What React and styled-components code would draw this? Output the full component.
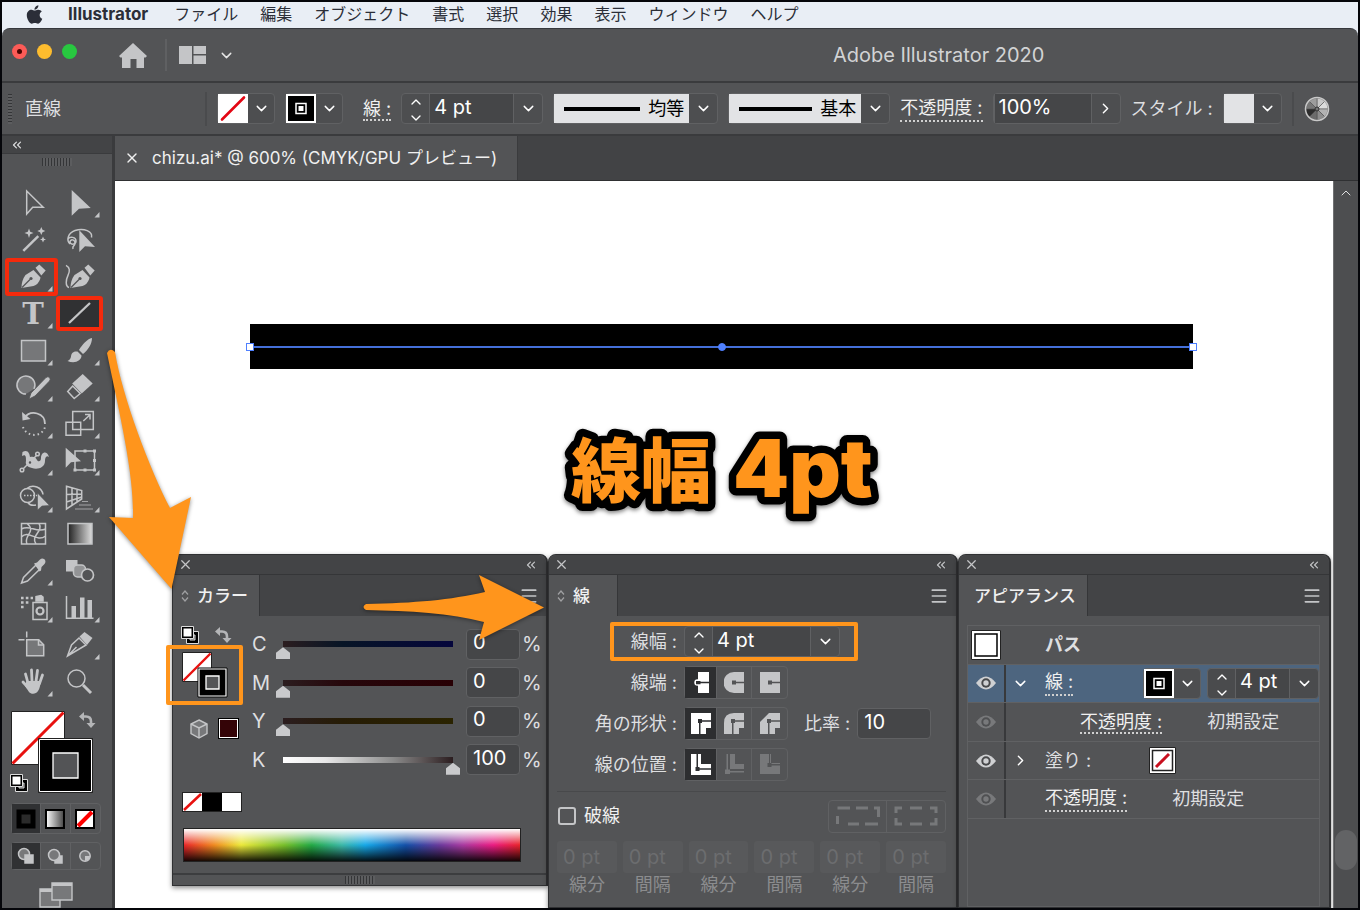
/* eslint-disable react/prop-types */
import styled, { createGlobalStyle, css } from 'styled-components';
import { ChevronDown, ChevronRight, ChevronUp, ChevronsLeft, Menu, X } from 'lucide-react';
import { FaApple } from 'react-icons/fa';

const GlobalStyle = createGlobalStyle`
  :root {
    --panel: #535456;
    --dark: #434446;
    --field: #454648;
    --line: #3a3b3d;
    --edge: #606163;
    --icon: #c4c5c7;
    --text: #dedfe0;
    --orange: #ff951c;
    --red: #f52a0c;
  }
  * {
    box-sizing: border-box;
  }
  body {
    margin: 0;
    font-family: Inter, 'Noto Sans CJK JP', sans-serif;
    font-size: 18px;
    line-height: 24px;
    color: var(--text);
  }
  button, input, select {
    font: inherit;
    color: inherit;
    margin: 0;
    padding: 0;
    border: 0;
    background: none;
    border-radius: 0;
  }
  svg {
    display: block;
    flex: none;
  }
`;

const Screen = styled.div`
  position: relative;
  display: flex;
  flex-direction: column;
  height: 100vh;
  overflow: hidden;
  border: 2px solid #05060a;
  background: #e9eef5;
`;

/* ---------- menu bar ---------- */

const MenuBar = styled.nav`
  display: flex;
  align-items: center;
  height: 26px;
  padding: 0 0 2px 22px;
  gap: 22px;
  color: #2b2e38;
  font-size: 16px;
  white-space: nowrap;
  a {
    color: inherit;
    text-decoration: none;
  }
  strong {
    margin-right: 4px;
    padding-left: 1px;
    font-size: 17px;
    font-weight: 700;
  }
`;

/* ---------- window frame ---------- */

const AppWindow = styled.div`
  display: flex;
  flex-direction: column;
  flex: 1;
  min-height: 0;
  background: var(--panel);
  border-top: 1px solid #35373c;
  border-radius: 8px 8px 0 0;
`;

const TitleBar = styled.header`
  display: flex;
  align-items: center;
  height: 54px;
  padding-left: 10px;
  border-bottom: 2px solid var(--line);
`;

const Lights = styled.div`
  display: flex;
  gap: 10px;
  padding-bottom: 8px;
  margin-right: 42px;
`;

const Light = styled.button`
  display: grid;
  place-items: center;
  width: 15px;
  height: 15px;
  border-radius: 50%;
  background: ${(p) => p.$color};
  &::after {
    content: '';
    width: 5px;
    height: 5px;
    border-radius: 50%;
    background: ${(p) => (p.$dot ? '#4a0502' : 'none')};
  }
`;

const IconButton = styled.button`
  display: grid;
  place-items: center;
  color: ${(p) => p.$color || 'var(--icon)'};
`;

const Divider = styled.span`
  width: 2px;
  height: ${(p) => p.$height || 32}px;
  background: ${(p) => p.$color || '#5f6062'};
`;

const LayoutTools = styled.div`
  display: flex;
  align-items: center;
  gap: 12px;
  margin-left: 18px;
`;

const Title = styled.h1`
  margin: 0 23% 0 auto;
  padding-right: 4px;
  font-size: 20px;
  font-weight: 400;
  color: #d2d3d4;
`;

/* ---------- shared controls ---------- */

const Control = styled.div`
  display: flex;
  height: 31px;
  width: ${(p) => p.$width}px;
  border: 1px solid var(--edge);
  border-radius: 4px;
  background: ${(p) => (p.$solid ? '#4a4b4d' : '#4d4e50')};
  color: #fff;
`;

const Arrow = styled.button`
  display: grid;
  place-items: center;
  width: 28px;
  height: 100%;
  color: #fff;
`;

const Spinner = styled.div`
  display: grid;
  grid-template-rows: 1fr 1fr;
  width: 27px;
  button {
    display: grid;
    place-items: center;
    color: #fff;
  }
`;

const ValueInput = styled.input`
  flex: 1;
  min-width: 0;
  padding: 0 0 4px 4px;
  font-size: 20px;
  color: #fff;
  background: var(--field);
  border: solid var(--edge);
  border-width: 0 1px;
`;

const BoxInput = styled.input`
  width: ${(p) => p.$width}px;
  height: 31px;
  padding: 0 0 4px 6px;
  font-size: 20px;
  color: #fff;
  background: var(--field);
  border: 1px solid var(--edge);
  border-radius: 4px;
`;

const Dotted = styled.a`
  color: ${(p) => p.$color || '#f0f0f0'};
  text-decoration: none;
  line-height: 24px;
  border-bottom: 2px dotted #d0d0d0;
  white-space: nowrap;
`;

const SwatchButton = styled.button`
  width: 30px;
  height: 29px;
`;

const StrokeSample = styled.label`
  display: flex;
  align-items: center;
  gap: 8px;
  flex: 1;
  padding-left: 10px;
  background: #e2e3e5;
  color: #000;
  select {
    appearance: none;
    width: 40px;
  }
`;

const ControlBar = styled.div`
  display: flex;
  align-items: center;
  height: 53px;
  gap: 10px;
  padding-left: 6px;
  border-bottom: 2px solid var(--line);
  white-space: nowrap;
`;

const ObjectKind = styled.span`
  width: 170px;
  margin-left: 3px;
`;

const Grip = styled.span`
  width: ${(p) => (p.$vertical ? 4 : 30)}px;
  height: ${(p) => (p.$vertical ? 30 : 8)}px;
  background: repeating-linear-gradient(
    ${(p) => (p.$vertical ? '180deg' : '90deg')},
    #343537 0 1px,
    #5c5d5f 1px 3px
  );
`;

const StrokeLabel = styled.span`
  padding-left: 10px;
`;

/* ---------- workspace ---------- */

const Workspace = styled.div`
  display: flex;
  flex: 1;
  min-height: 0;
`;

const Toolbox = styled.aside`
  display: flex;
  flex-direction: column;
  width: 113px;
  flex: none;
  border-right: 3px solid var(--line);
`;

const ToolboxHead = styled.div`
  display: flex;
  align-items: center;
  height: 18px;
  padding-left: 8px;
  background: var(--dark);
  border-bottom: 1px solid var(--line);
`;

const ToolboxGrip = styled.div`
  display: flex;
  justify-content: center;
  height: 31px;
  padding-top: 4px;
`;

const Tools = styled.div`
  display: grid;
  grid-template: repeat(14, 1fr) / 46px 46px;
  column-gap: 1px;
  height: 515px;
  padding-left: 8px;
`;

const Tool = styled.button`
  position: relative;
  display: grid;
  place-items: center;
  color: var(--icon);
  ${(p) =>
    p.$marked &&
    css`
      &::before {
        content: '';
        position: absolute;
        inset: ${p.$active ? '1px 0 1px -1px' : '-1px -2px -1px -5px'};
        border: 4px solid var(--red);
        border-radius: 3px;
        background: ${p.$active ? '#303133' : 'none'};
      }
    `}
  svg {
    position: relative;
  }
`;

const TypeGlyph = styled.span`
  font-family: 'DejaVu Serif', serif;
  font-weight: 700;
  font-size: 29px;
  line-height: 30px;
`;

const TypeCell = styled.span`
  display: grid;
  place-items: center;
  & > * {
    grid-area: 1 / 1;
  }
`;

const ProxyRow = styled.div`
  padding: 10px 0 0 8px;
`;

const ModeRow = styled.div`
  display: grid;
  grid-template-columns: repeat(3, 1fr);
  width: 90px;
  height: ${(p) => p.$height}px;
  margin: ${(p) => p.$top}px 0 0 9px;
  border: 1px solid var(--edge);
  border-radius: 4px;
  button {
    display: grid;
    place-items: center;
    border-right: 1px solid var(--edge);
  }
  button:first-child {
    background: #303133;
  }
  button:last-child {
    border: 0;
  }
`;

const ScreenMode = styled.button`
  margin: 12px 0 0 37px;
  width: 34px;
`;

const Main = styled.main`
  display: flex;
  flex-direction: column;
  flex: 1;
  min-width: 0;
`;

const TabBar = styled.div`
  display: flex;
  height: 45px;
  background: #424345;
  border-bottom: 1px solid #2f3032;
`;

const DocTab = styled.div`
  display: flex;
  align-items: center;
  gap: 12px;
  width: 403px;
  padding-left: 9px;
  font-size: 17px;
  color: #f0f0f0;
  background: var(--panel);
  border-right: 1px solid var(--line);
  white-space: nowrap;
`;

const Stage = styled.div`
  display: flex;
  flex: 1;
  min-height: 0;
`;

const Canvas = styled.div`
  position: relative;
  flex: 1;
  min-width: 0;
  overflow: hidden;
  background: #fff;
`;

const ScrollBar = styled.div`
  display: flex;
  flex-direction: column;
  align-items: center;
  width: 25px;
  padding-top: 4px;
  background: #4d4e50;
  border-left: 1px solid #707173;
`;

const ScrollThumb = styled.div`
  width: 22px;
  height: 40px;
  margin: auto 0 38px;
  border-radius: 11px;
  background: #626365;
`;

const LineObject = styled.div`
  position: relative;
  display: flex;
  align-items: center;
  height: 45px;
  margin: 143px 140px 0 135px;
  background: #000;
  &::before {
    content: '';
    flex: 1;
    height: 2px;
    background: #446fd8;
  }
`;

const Anchor = styled.span`
  position: absolute;
  left: ${(p) => p.$at};
  top: 50%;
  width: 8px;
  height: 8px;
  transform: translate(-50%, -50%);
  border: 1px solid #4f80ff;
  border-radius: ${(p) => (p.$round ? '50%' : 0)};
  background: ${(p) => (p.$round ? '#4f80ff' : '#fff')};
`;

const Caption = styled.svg`
  margin: 41px auto 0;
  font-size: 70px;
  font-weight: 900;
  fill: var(--orange);
  stroke: #000;
  stroke-width: 15px;
  stroke-linejoin: round;
  paint-order: stroke fill;
  filter: drop-shadow(0 2px 2px rgba(0, 0, 0, 0.5));
`;

/* ---------- floating panels ---------- */

const Dock = styled.div`
  position: absolute;
  inset: 373px 2px 0 57px;
  display: grid;
  grid-template-columns: 376fr 410fr 373fr;
  align-items: start;
`;

const PanelBox = styled.section`
  min-width: 0;
  height: ${(p) => (p.$fill ? '100%' : 'auto')};
  background: var(--panel);
  border: solid #303133;
  border-width: 1px 2px 1px 1px;
  border-radius: 8px 8px 0 0;
  box-shadow: 0 2px 5px rgba(0, 0, 0, 0.45);
`;

const PanelHead = styled.div`
  display: flex;
  justify-content: space-between;
  align-items: center;
  height: 20px;
  padding: 0 8px 0 5px;
  background: var(--dark);
  border-bottom: 1px solid #353638;
  border-radius: 8px 8px 0 0;
`;

const PanelTabs = styled.div`
  display: flex;
  height: 41px;
  justify-content: space-between;
  align-items: center;
  padding-right: 7px;
  background: var(--dark);
`;

const PanelTab = styled.h2`
  display: flex;
  align-items: center;
  gap: 8px;
  height: 100%;
  width: ${(p) => p.$width}px;
  margin: 0;
  padding-left: ${(p) => p.$pad || 8}px;
  font-size: 17px;
  font-weight: 500;
  color: #f0f0f0;
  background: var(--panel);
  border-right: 1px solid #353638;
  white-space: nowrap;
`;

const ColorBody = styled.div`
  display: grid;
  grid-template-columns: 62px 1fr;
  gap: 9px;
  padding: 9px 5px 0 8px;
`;

const ColorSide = styled.div`
  display: flex;
  flex-direction: column;
`;

const SideRow = styled.div`
  display: flex;
  align-items: center;
  justify-content: space-between;
  height: 20px;
  padding: 0 11px 0 0;
`;

const MarkedProxy = styled.div`
  position: relative;
  margin-top: 7px;
  padding: 0 0 0 1px;
  &::before {
    content: '';
    position: absolute;
    inset: -7px 0 -7px -15px;
    border: 4px solid var(--orange);
    border-radius: 2px;
  }
`;

const CubeRow = styled.div`
  display: flex;
  gap: 10px;
  align-items: center;
  padding: 20px 0 0 9px;
`;

const NearColor = styled.button`
  width: 21px;
  height: 21px;
  border: 2px solid #fff;
  outline: 1px solid #000;
  outline-offset: -1px;
  background: #340407;
`;

const Channels = styled.div`
  display: grid;
  grid-template-rows: repeat(4, 1fr);
  height: 154px;
`;

const ChannelRow = styled.div`
  display: grid;
  grid-template-columns: 20px 184px 54px 16px;
  gap: 0 4px;
  align-items: center;
  font-size: 20px;
  input[type='text'] {
    margin-left: 2px;
  }
`;

const Slider = styled.input`
  appearance: none;
  width: 184px;
  height: 30px;
  background: ${(p) => p.$ramp} 7px 12px / 170px 6px no-repeat;
  &::-webkit-slider-runnable-track {
    height: 30px;
  }
  &::-webkit-slider-thumb {
    appearance: none;
    width: 14px;
    height: 12px;
    margin-top: 18px;
    background: #c9cacc;
    clip-path: polygon(50% 0, 100% 45%, 100% 100%, 0 100%, 0 45%);
  }
`;

const Chips = styled.div`
  display: flex;
  width: 60px;
  height: 20px;
  margin: 13px 0 0 9px;
  border: 1px solid #222;
  button {
    flex: 1;
    background: #fff;
  }
  button:nth-child(2) {
    background: #000;
  }
`;

const Spectrum = styled.div`
  height: 34px;
  margin: 16px 25px 11px 10px;
  border: 1px solid #222;
  background:
    linear-gradient(#fff, rgba(255, 255, 255, 0) 50%, rgba(0, 0, 0, 0) 50%, rgba(0, 0, 0, 0.9)),
    linear-gradient(
      90deg,
      #e8262a,
      #f08a20 9%,
      #ece83a 17%,
      #76be2a 30%,
      #23a945 38%,
      #3cb8a8 47%,
      #16a8e8 54%,
      #1450a8 66%,
      #6a3a9c 76%,
      #a83aa0 83%,
      #ea1c82 92%,
      #e8242a
    );
`;

const PanelFoot = styled.div`
  display: flex;
  justify-content: center;
  height: 12px;
  padding-top: 1px;
  border-top: 2px solid #3c3d3f;
`;

const StrokeBody = styled.div`
  padding: 5px 10px 0 8px;
`;

const FormRow = styled.div`
  position: relative;
  display: grid;
  grid-template-columns: 120px auto 1fr;
  gap: 7px;
  align-items: center;
  height: 41px;
  & > label:first-child,
  & > span:first-child {
    text-align: right;
    white-space: nowrap;
  }
  ${(p) =>
    p.$marked &&
    css`
      &::before {
        content: '';
        position: absolute;
        inset: 1px 88px 1px 53px;
        border: 4px solid var(--orange);
        border-radius: 2px;
        z-index: 1;
        pointer-events: none;
      }
    `}
`;

const Segments = styled.div`
  display: flex;
  height: 33px;
  border: 1px solid var(--edge);
  border-radius: 4px;
  button {
    --gap: var(--panel);
    display: grid;
    place-items: center;
    width: ${(p) => p.$cell || 35}px;
    color: var(--icon);
    border-right: 1px solid var(--edge);
  }
  button:last-child {
    border: 0;
  }
  button[aria-pressed='true'] {
    --gap: #2d2e30;
    width: 32px;
    color: #fff;
    background: #2d2e30;
  }
  button:disabled {
    color: #77787a;
  }
`;

const Ratio = styled.label`
  display: flex;
  align-items: center;
  gap: 7px;
  padding-left: 9px;
  white-space: nowrap;
`;

const DashHead = styled.div`
  display: flex;
  justify-content: space-between;
  align-items: center;
  height: 46px;
  margin-top: 6px;
  padding-top: 3px;
  border-top: 1px solid #48494b;
`;

const CheckLabel = styled.label`
  display: flex;
  align-items: center;
  gap: 8px;
  padding-left: 1px;
  color: #f0f0f0;
  input {
    appearance: none;
    width: 18px;
    height: 18px;
    border: 2px solid var(--icon);
    border-radius: 3px;
  }
`;

const DashGrid = styled.div`
  display: grid;
  grid-template-columns: repeat(6, 1fr);
  gap: 6px;
  margin-top: 4px;
  color: #8b8c8e;
  text-align: center;
  input {
    display: block;
    width: 100%;
    height: 32px;
    padding-left: 6px;
    font-size: 20px;
    color: #6c6d6f;
    background: #58595b;
    border-radius: 3px;
  }
`;

const LookBody = styled.div`
  height: calc(100% - 70px);
  margin: 9px 9px 0 8px;
  border: 1px solid var(--edge);
`;

const LookList = styled.ul`
  display: grid;
  grid-template-rows: repeat(5, 1fr);
  height: 193px;
  margin: 0;
  padding: 0;
  list-style: none;
`;

const LookRow = styled.li`
  display: grid;
  grid-template-columns: 38px 39px auto 1fr;
  align-items: center;
  border-bottom: 1px solid var(--edge);
  background: ${(p) => (p.$selected ? '#4d657f' : 'none')};
  white-space: nowrap;
  strong {
    font-weight: 700;
    font-size: 18px;
  }
`;

const EyeCell = styled.button`
  display: grid;
  place-items: center;
  height: 100%;
  border-right: 2px solid ${(p) => (p.$plain ? 'transparent' : '#38393b')};
  svg {
    opacity: ${(p) => (p.$faint ? 0.3 : 1)};
  }
`;

const LookValue = styled.div`
  display: flex;
  align-items: center;
  justify-content: ${(p) => (p.$end ? 'flex-end' : 'flex-start')};
  gap: 6px;
  padding-left: ${(p) => p.$indent || 0}px;
`;

const LookLabel = styled.span`
  padding-left: ${(p) => p.$indent || 0}px;
`;

const Arrows = styled.svg`
  position: absolute;
  left: -2px;
  top: -2px;
  pointer-events: none;
  filter: drop-shadow(0 1px 2px rgba(0, 0, 0, 0.45));
`;

/* ---------- drawings ---------- */

const flyout = <path d="M42.5 27v5.5h-5z" fill="currentColor" />;

const penNib = (
  <>
    <path d="M11.5 29c0-5 1-9 4-13l8-5 7 7.5c-1 5-4 7.5-7 8.5z" fill="currentColor" />
    <path d="M25.5 8.7 29.3 5.4l6.4 6-4.4 5z" fill="currentColor" />
    <path d="m12 28.5 8-8" stroke="#535456" strokeWidth="1.3" />
    <circle cx="21" cy="19.5" r="1.6" fill="#535456" />
  </>
);

const TOOLS = [
  { name: 'ダイレクト選択', art: <path d="M16.7 6v23l6-6.7h10.5z" /> },
  { name: '選択', more: true, art: <path d="M14.7 5v25.7l7.3-7 11.7-.7z" fill="currentColor" stroke="none" /> },
  {
    name: '自動選択',
    art: (
      <>
        <path d="m13.3 28.9 15-14.7" strokeWidth="2.5" />
        <path
          stroke="none"
          fill="currentColor"
          d="m19 6.5 1.2 3.3 3.3 1.2-3.3 1.2-1.2 3.800-1.200-3.800-3.300-1.200 3.300-1.200zM31.300 5l1.200 2.800 2.800 1.200-2.800 1.200-1.200 2.800-1.200-2.800-2.800-1.200 2.800-1.200zM33 14.500l1 2.300 2 .7-2 .8-1 2.200-1-2.200-2-.8 2-.7z"
        />
      </>
    ),
  },
  {
    name: 'なげなわ',
    art: (
      <>
        <path d="M13 22c-4-4-2-11 5-13.500 9-3 18 1 16.500 7M11 17c2-3 8-2 8 2s-6 4-6 1 5-3 5 1-3 2-2 6" />
        <path d="M22.300 8.200v21.700l5.700-5.700 10 .7z" fill="currentColor" stroke="none" />
      </>
    ),
  },
  { name: 'ペン', more: true, marked: true, art: penNib, plain: true },
  {
    name: '曲線',
    art: (
      <>
        <g transform="translate(2 0)" stroke="none">
          {penNib}
        </g>
        <path d="M9 6.400c4 2 4 6 2 10s-3 11 1 12" />
      </>
    ),
  },
  { name: '文字', more: true, type: true },
  { name: '直線', marked: true, active: true, art: <path d="m12 27 21-20" strokeWidth="2.300" /> },
  { name: '長方形', more: true, art: <path d="M11.500 7.500h24v20.500h-24z" fill="#767779" /> },
  {
    name: 'ブラシ',
    more: true,
    art: (
      <path
        stroke="none"
        fill="currentColor"
        d="M35 5c-5 1-10 7-13 12l4 4c5-4 9-10 9-16zM20.500 18.500c-5-.5-6 2-6.500 5-.3 2-1.500 3.500-3.500 4.500 7 3 14 0 14-5.500z"
      />
    ),
  },
  {
    name: 'Shaper',
    more: true,
    art: (
      <>
        <path d="M24 20a9 9 0 1 0-8 5" fill="#767779" />
        <path d="m19 30 2-6L36 8.500q2-1.500 3.500 0t0 3.500L25 27z" fill="currentColor" stroke="#535456" strokeWidth=".8" />
      </>
    ),
  },
  {
    name: '消しゴム',
    more: true,
    art: (
      <>
        <path d="m25.700 5 10 9.500-11 10-9.500-10z" fill="currentColor" stroke="none" />
        <path d="m15.700 17-5 5.500 6.500 7 6-5z" />
      </>
    ),
  },
  {
    name: '回転',
    more: true,
    art: (
      <>
        <path d="M14 12c7-9 21-5 21 6" strokeWidth="1.800" />
        <path d="m12 6 .5 8.500 8-1.500z" fill="currentColor" stroke="none" />
        <path d="M13 21c3 10 19 11 22 0" strokeDasharray="1.500 3" strokeWidth="2" />
      </>
    ),
  },
  {
    name: '拡大・縮小',
    more: true,
    art: <path d="M15.700 5.500h20.600v18H15.700zM9 16.200h14.700v13H9zM26.300 15l6.500-6M28 8.500h5v5" />,
  },
  {
    name: '線幅',
    more: true,
    art: (
      <>
        <path
          d="M12.500 9c5-3 7 1 7.500 5 3-1 6 0 7 3 1 2 4 2 4-2 0-6 6-8 8-1-3-2-4 1-4 4 0 7-8 9-13 7-5-1-7-4-6-7 0-4 0-7-4-5z"
          fill="currentColor"
          stroke="none"
        />
        <path d="m12 27 15-15" />
        <circle cx="12" cy="27" r="1.800" fill="#535456" />
        <circle cx="27.500" cy="11" r="1.800" fill="#535456" />
        <circle cx="20" cy="19.500" r="2" fill="#535456" />
      </>
    ),
  },
  {
    name: '自由変形',
    more: true,
    art: (
      <>
        <path d="M18 8h19.500v19H18z" />
        <path
          d="M8.700 4.700v20l5.300-5.500 10-1zM26.500 6.500h3v3h-3zM36 6.500h3v3h-3zM36 16h3v3h-3zM36 25.500h3v3h-3zM26.500 25.500h3v3h-3zM16.500 25.500h3v3h-3z"
          fill="currentColor"
          stroke="none"
        />
      </>
    ),
  },
  {
    name: 'シェイプ形成',
    more: true,
    art: (
      <>
        <circle cx="17.500" cy="15.500" r="7" />
        <path d="M17 8.500c6-5 15-1 16 6M18 22.500c2 3 6 3 8 2.500" />
        <path d="M14 15.500h14" strokeDasharray="1.500 1.500" />
        <path d="M27.500 13v17l4.500-4 7.500-.5z" fill="currentColor" stroke="#535456" strokeWidth=".6" />
      </>
    ),
  },
  {
    name: '遠近グリッド',
    more: true,
    art: (
      <>
        <path d="M9.500 6.300 24.700 10.600V19L9.500 29zM9.500 14.500l15.200-.5M9.500 22l15.200-5M15 8v17M20 9.500v12.500" />
        <path d="M25 21.500h6M22 25h12M18 29h18" strokeWidth="1" opacity=".7" />
      </>
    ),
  },
  {
    name: 'メッシュ',
    art: <path d="M11.500 7.500h24v20.500h-24zM11.500 13c8-5 14 4 24 0M11.500 21c7-8 15 6 24-1M17 7.500c10 8-4 12 0 20.500M29 7.500c5 8-9 12-3 20.500" />,
  },
  { name: 'グラデーション', art: <path d="M11 7.500h24v20.500H11z" fill="url(#toolRamp)" /> },
  {
    name: 'スポイト',
    more: true,
    art: (
      <>
        <path d="m11.500 30 2-5.500L26 12l4 4-12.500 12z" />
        <path d="m24 10.500 3-1 3-3c3-3 7.500 1 4.500 4.500l-3 3-.5 3.500-1.500 1z" fill="currentColor" stroke="none" />
      </>
    ),
  },
  {
    name: 'ブレンド',
    art: (
      <>
        <path d="M9 7h11.500v11.500H9z" fill="currentColor" stroke="none" />
        <rect x="16.500" y="12" width="12" height="12" rx="4" fill="#939496" />
        <circle cx="30.500" cy="22" r="6" fill="#535456" strokeWidth="1.700" />
      </>
    ),
  },
  {
    name: 'シンボルスプレー',
    more: true,
    art: (
      <>
        <path d="M11 8h12M11 12.500h9M11 17h4" strokeWidth="2.600" strokeDasharray="2.600 2.200" />
        <path d="M26 11V6.500l5-1 2 1.500v4z" fill="currentColor" />
        <path d="M23 12.500h14v17H23z" />
        <circle cx="30" cy="21" r="3.500" strokeWidth="2.200" />
      </>
    ),
  },
  {
    name: 'グラフ',
    more: true,
    art: (
      <>
        <path d="M9.500 6v22.300h27" />
        <path d="M14.500 16h4.500v12h-4.500zM23 7.500h4.500V28H23zM30.500 10H35v18h-4.500z" fill="currentColor" stroke="none" />
      </>
    ),
  },
  {
    name: 'アートボード',
    art: (
      <>
        <path d="M16.700 12.700h12l5 5v11h-17z" fill="#767779" />
        <path d="M28.500 12.500v5.500h5.500M16.700 4.500v6M8.500 12.700h6" />
      </>
    ),
  },
  {
    name: 'スライス',
    more: true,
    art: (
      <>
        <path d="m10.500 29 4-11 7.500-7 7 7zM11 28.500l8.500-8.500" />
        <path d="m22.500 9.500 5-4.500 8 6-5.500 7z" fill="currentColor" stroke="none" />
      </>
    ),
  },
  {
    name: '手のひら',
    more: true,
    art: (
      <>
        <path d="m18 19-2.500-9M22 17l-.5-11M26 17.500l1.500-11M29.500 19.500l3-8.500M18 23.500l-5-5.500" strokeWidth="2.800" strokeLinecap="round" />
        <path d="M16.500 17h14.500c-1 5-1 7-3 10-2 3.500-7 3.500-9 1l-4-6z" fill="currentColor" stroke="none" />
      </>
    ),
  },
  {
    name: 'ズーム',
    art: (
      <>
        <circle cx="19.500" cy="14.500" r="8.500" />
        <path d="m26 21 8 8" strokeWidth="3" />
      </>
    ),
  },
];

const MENUS = ['ファイル', '編集', 'オブジェクト', '書式', '選択', '効果', '表示', 'ウィンドウ', 'ヘルプ'];

const CHANNELS = [
  { id: 'C', value: 0, ramp: 'linear-gradient(90deg, #2b1d1f, #071526 35%, #05063c)' },
  { id: 'M', value: 0, ramp: 'linear-gradient(90deg, #2b1d1f, #26070b 35%, #280004)' },
  { id: 'Y', value: 0, ramp: 'linear-gradient(90deg, #2b1d1f, #261c05 35%, #2a2300)' },
  { id: 'K', value: 100, ramp: 'linear-gradient(90deg, #fff, #e8e8e8 25%, #8a8a8a 65%, #2b1d1f)' },
];

const NoneSwatch = () => (
  <svg width="30" height="29" viewBox="0 0 30 29">
    <path d="M0 0h30v29H0z" fill="#fff" />
    <path d="M4 25.500 26 3.500" stroke="#e30613" strokeWidth="2.600" strokeLinecap="round" />
  </svg>
);

const StrokeSwatch = () => (
  <svg width="30" height="29" viewBox="0 0 30 29">
    <path d="M1 1h28v27H1z" stroke="#fff" strokeWidth="2" />
    <path d="M10 9.500h10v10H10z" stroke="#fff" strokeWidth="1.500" />
    <path d="M12.500 12h5v5h-5z" fill="#fff" />
  </svg>
);

const SwapIcon = ({ size = 18 }) => (
  <svg width={size} height={size} viewBox="0 0 18 18" fill="none" stroke="#b4b5b7" strokeWidth="2.600">
    <path d="M5 5.500h3q5 0 5 5v2" />
    <path d="M6 1v9L1 5.500zM8.500 12h9l-4.500 5z" fill="#b4b5b7" stroke="none" />
  </svg>
);

const DefaultIcon = () => (
  <svg width="18" height="18" viewBox="0 0 18 18" fill="none">
    <path d="M5.500 5.500h12v12h-12z" fill="#000" stroke="#ddd" />
    <path d="M9 9h5v5H9z" fill="#535456" stroke="#ddd" />
    <path d="M.5 .5h12v12H.5z" fill="#000" stroke="#ddd" />
    <path d="M2.500 2.500h8v8h-8z" fill="#fff" />
  </svg>
);

const ToolProxy = () => (
  <svg width="92" height="84" viewBox="0 0 92 84" fill="none">
    <path d="M1.500 1.500h53v53h-53z" fill="#fff" stroke="#222" />
    <path d="m2.500 53.500 51-51" stroke="#e8110f" strokeWidth="3" />
    <path d="M28.500 28.500h54v54h-54z" fill="#000" stroke="#222" />
    <path d="M29.500 29.500h52v52h-52z" fill="#000" stroke="#fff" />
    <path d="M43 43h25v25H43z" fill="#535456" stroke="#fff" strokeWidth="1.300" />
    <g transform="translate(68 1)">
      <SwapIcon />
    </g>
    <g transform="translate(0 64)">
      <DefaultIcon />
    </g>
  </svg>
);

const PanelProxy = () => (
  <svg width="46" height="46" viewBox="0 0 46 46" fill="none">
    <path d="M.5 .5h29v29H.5z" fill="#fff" stroke="#222" />
    <path d="M1.500 28.500l27-27" stroke="#e8110f" strokeWidth="2.400" />
    <path d="M16 16h29v29H16z" fill="#000" stroke="#000" />
    <path d="M17 17h27v27H17z" stroke="#fff" strokeWidth="1.200" />
    <path d="M24 24h13v13H24z" fill="#535456" stroke="#fff" strokeWidth="1.300" />
  </svg>
);

const Eye = () => (
  <svg width="20" height="14" viewBox="0 0 20 14">
    <path d="M0 7q10-13 20 0-10 13-20 0z" fill="#cfd0d2" />
    <circle cx="10" cy="7" r="4.700" fill="#48494b" />
    <circle cx="10" cy="7" r="2.700" fill="#cfd0d2" />
  </svg>
);

const ColorWheel = () => (
  <svg width="26" height="26" viewBox="0 0 26 26">
    {['#c9c9c9', '#dcdcdc', '#b2b2b2', '#8d8d8d', '#6b6b6b', '#2d2d2d', '#777', '#9d9d9d'].map((fill, i) => (
      <path key={fill} d="M13 13V2a11 11 0 0 1 7.780 3.220z" fill={fill} stroke="#4a4a4a" strokeWidth=".5" transform={`rotate(${i * 45} 13 13)`} />
    ))}
    <circle cx="13" cy="13" r="11.500" fill="none" stroke="#c9c9c9" strokeWidth="1.500" />
    <circle cx="13" cy="13" r="2" fill="#777" stroke="#333" />
  </svg>
);

const Down = () => <ChevronDown size={17} strokeWidth={2} />;

function Stepper({ width, label, solid }) {
  return (
    <Control $width={width} $solid={solid}>
      <Spinner>
        <button aria-label="増やす">
          <ChevronUp size={16} strokeWidth={2} />
        </button>
        <button aria-label="減らす">
          <ChevronDown size={16} strokeWidth={2} />
        </button>
      </Spinner>
      <ValueInput type="text" aria-label={label} id={label} defaultValue="4 pt" />
      <Arrow aria-label={`${label}の一覧`}>
        <Down />
      </Arrow>
    </Control>
  );
}

function SwatchCombo({ width, label, children }) {
  return (
    <Control $width={width}>
      <SwatchButton aria-label={label}>{children}</SwatchButton>
      <Arrow aria-label={`${label}の一覧`}>
        <Down />
      </Arrow>
    </Control>
  );
}

function SampleCombo({ width, label, value, line }) {
  return (
    <Control $width={width}>
      <StrokeSample>
        <svg width={line} height="4">
          <path d={`M0 0h${line}v4H0z`} />
        </svg>
        <select aria-label={label}>
          <option>{value}</option>
        </select>
      </StrokeSample>
      <Arrow aria-label={`${label}の一覧`}>
        <Down />
      </Arrow>
    </Control>
  );
}

function Panel({ title, width, pad, cycle, fill, children }) {
  return (
    <PanelBox $fill={fill}>
      <PanelHead>
        <IconButton aria-label="閉じる">
          <X size={15} strokeWidth={2} />
        </IconButton>
        <IconButton aria-label="折りたたむ">
          <ChevronsLeft size={14} strokeWidth={2} />
        </IconButton>
      </PanelHead>
      <PanelTabs>
        <PanelTab $width={width} $pad={pad}>
          {cycle && (
            <svg width="8" height="12" viewBox="0 0 8 12" fill="none" stroke="#a0a1a3" strokeWidth="1.200">
              <path d="M1 4.500 4 1l3 3.500M1 7.500 4 11l3-3.500" />
            </svg>
          )}
          {title}
        </PanelTab>
        <IconButton aria-label="パネルメニュー">
          <Menu size={20} strokeWidth={2} />
        </IconButton>
      </PanelTabs>
      {children}
    </PanelBox>
  );
}

function ColorPanel() {
  return (
    <Panel title="カラー" width={87} cycle>
      <ColorBody>
        <ColorSide>
          <SideRow>
            <DefaultIcon />
            <SwapIcon />
          </SideRow>
          <MarkedProxy>
            <PanelProxy />
          </MarkedProxy>
          <CubeRow>
            <svg width="18" height="20" viewBox="0 0 18 20" fill="#77787a" stroke="#c4c5c7" strokeWidth="1.400">
              <path d="M9 1l8 4v9.500L9 19l-8-4.500V5z" />
              <path d="M1 5l8 4 8-4M9 9v10" />
            </svg>
            <NearColor aria-label="近似色" />
          </CubeRow>
        </ColorSide>
        <Channels>
          {CHANNELS.map((c) => (
            <ChannelRow key={c.id}>
              <label htmlFor={`ch-${c.id}`}>{c.id}</label>
              <Slider type="range" aria-label={c.id} defaultValue={c.value} $ramp={c.ramp} />
              <BoxInput type="text" id={`ch-${c.id}`} defaultValue={c.value} $width={54} />
              <span>%</span>
            </ChannelRow>
          ))}
        </Channels>
      </ColorBody>
      <Chips>
        <button aria-label="なし">
          <svg width="19" height="18">
            <path d="M1 17 18 1" stroke="#e8110f" strokeWidth="2.500" />
          </svg>
        </button>
        <button aria-label="ブラック" />
        <button aria-label="ホワイト" />
      </Chips>
      <Spectrum />
      <PanelFoot>
        <Grip />
      </PanelFoot>
    </Panel>
  );
}

const CAPS = [
  <>
    <path d="M7 0h11v21H7z" />
    <circle cx="6.500" cy="10.500" r="3.200" />
    <path d="M5 9h4.500v.8H18v1.500H9.500v1H5z" fill="var(--gap)" />
  </>,
  <>
    <path d="M10 0h10v21H10a10.500 10.500 0 0 1 0-21z" />
    <path d="M8 8.500h4v1.200h8v1.500h-8v1.300H8z" fill="var(--gap)" />
  </>,
  <>
    <path d="M0 0h20v21H0z" />
    <path d="M8 8.500h4v1.200h8v1.500h-8v1.300H8z" fill="var(--gap)" />
  </>,
];

/* path that runs from the corner point, to the right and down */
const joinCut = <path d="M7 6h4v1.200h9v1.500h-9V10H9.500v11H8V10H7z" fill="var(--gap)" />;

const JOINS = ['M0 0h20v15h-5v6H0z', 'M10 0h10v15h-5v6H0V10Q0 0 10 0z', 'M9 0h11v15h-5v6H0V9z'].map((d) => (
  <>
    <path d={d} />
    {joinCut}
  </>
));

const ALIGNS = [
  <>
    <path d="M0 0h10v10h10v11H0z" />
    <path d="M5.500 0H7v13h1.500v1.200H20v1.500H8.500V17h-4v-4h1z" fill="var(--gap)" />
  </>,
  <>
    <path d="M6 0h5v10h9v5H6z" />
    <path d="M2.500 0H4v15.500h2V17h14v1.500H6V20H1v-4.500h1.500z" />
  </>,
  <>
    <path d="M0 0h11v9h9v11H0z" />
    <path d="M9 0h1v9h1.500v1H20v1.500h-8.500V13h-4V9H9z" fill="var(--gap)" />
  </>,
];

function SegmentGroup({ name, icons, dimmed }) {
  return (
    <Segments>
      {icons.map((art, i) => (
        <button key={i} aria-label={`${name} ${i + 1}`} aria-pressed={i === 0} disabled={dimmed && i > 0}>
          <svg width="20" height="21" fill="currentColor">
            {art}
          </svg>
        </button>
      ))}
    </Segments>
  );
}

function StrokePanel() {
  return (
    <Panel title="線" width={69} cycle fill>
      <StrokeBody>
        <FormRow $marked>
          <label htmlFor="線幅">線幅 :</label>
          <Stepper width={156} label="線幅" />
        </FormRow>
        <FormRow>
          <span>線端 :</span>
          <SegmentGroup name="線端" icons={CAPS} />
        </FormRow>
        <FormRow>
          <span>角の形状 :</span>
          <SegmentGroup name="角" icons={JOINS} />
          <Ratio>
            比率 :
            <BoxInput type="text" defaultValue="10" $width={74} />
          </Ratio>
        </FormRow>
        <FormRow>
          <span>線の位置 :</span>
          <SegmentGroup name="位置" icons={ALIGNS} dimmed />
        </FormRow>
        <DashHead>
          <CheckLabel>
            <input type="checkbox" />
            破線
          </CheckLabel>
          <Segments $cell={58}>
            <button disabled aria-label="長さを保持">
              <svg width="44" height="20" fill="none" stroke="currentColor" strokeWidth="3">
                <path d="M1.500 18V10M1.500 2H14M20 2h12M38 2h4.500v9M12 18h11M29 18h13" />
              </svg>
            </button>
            <button disabled aria-label="コーナーに整列">
              <svg width="44" height="20" fill="none" stroke="currentColor" strokeWidth="3">
                <path d="M8 2H2v5M2 12v6h6M16 2h12M16 18h12M36 2h6v5M42 12v6h-6" />
              </svg>
            </button>
          </Segments>
        </DashHead>
        <DashGrid>
          {['線分', '間隔', '線分', '間隔', '線分', '間隔'].map((name, i) => (
            <label key={i}>
              <input type="text" defaultValue="0 pt" disabled />
              {name}
            </label>
          ))}
        </DashGrid>
      </StrokeBody>
    </Panel>
  );
}

function AppearancePanel() {
  return (
    <Panel title="アピアランス" width={129} pad={15} fill>
      <LookBody>
        <LookList>
          <LookRow>
            <EyeCell $plain aria-label="サムネール">
              <svg width="30" height="30" fill="none">
                <path d="M.5 .5h29v29H.5z" fill="#fff" stroke="#222" />
                <path d="M4 4h22v22H4z" fill="#fff" stroke="#000" strokeWidth="1.500" />
              </svg>
            </EyeCell>
            <span />
            <strong>パス</strong>
          </LookRow>
          <LookRow $selected>
            <EyeCell aria-label="表示">
              <Eye />
            </EyeCell>
            <Arrow aria-label="閉じる">
              <Down />
            </Arrow>
            <Dotted href="#stroke">線 :</Dotted>
            <LookValue $end>
              <SwatchCombo width={58} label="線の色">
                <StrokeSwatch />
              </SwatchCombo>
              <Stepper width={112} label="線の太さ" solid />
            </LookValue>
          </LookRow>
          <LookRow>
            <EyeCell $faint aria-label="表示">
              <Eye />
            </EyeCell>
            <span />
            <LookLabel $indent={35}>
              <Dotted href="#opacity">不透明度 :</Dotted>
            </LookLabel>
            <LookValue $indent={45}>初期設定</LookValue>
          </LookRow>
          <LookRow>
            <EyeCell aria-label="表示">
              <Eye />
            </EyeCell>
            <Arrow aria-label="開く">
              <ChevronRight size={17} strokeWidth={2} />
            </Arrow>
            <span>塗り :</span>
            <LookValue $indent={58}>
              <svg width="27" height="27" fill="none">
                <path d="M.5 .5h26v26H.5z" fill="#fff" stroke="#222" />
                <path d="M3.500 3.500h20v20h-20z" stroke="#222" strokeWidth="1.500" />
                <path d="M7 20 20 7" stroke="#c80f1e" strokeWidth="3" />
              </svg>
            </LookValue>
          </LookRow>
          <LookRow>
            <EyeCell $faint aria-label="表示">
              <Eye />
            </EyeCell>
            <span />
            <Dotted href="#opacity">不透明度 :</Dotted>
            <LookValue $indent={45}>初期設定</LookValue>
          </LookRow>
        </LookList>
      </LookBody>
    </Panel>
  );
}

function ToolButton({ tool }) {
  return (
    <Tool aria-label={tool.name} $marked={tool.marked} $active={tool.active}>
      {tool.type ? (
        <TypeCell>
          <svg width="46" height="36">
            {flyout}
          </svg>
          <TypeGlyph>T</TypeGlyph>
        </TypeCell>
      ) : (
        <svg width="46" height="36" fill="none" stroke={tool.plain ? 'none' : 'currentColor'} strokeWidth="1.500">
          {tool.art}
          {tool.more && <g stroke="none">{flyout}</g>}
        </svg>
      )}
    </Tool>
  );
}

function ToolPalette() {
  return (
    <Toolbox>
      <svg width="0" height="0">
        <linearGradient id="toolRamp">
          <stop offset="0" stopColor="#222" />
          <stop offset="1" stopColor="#ddd" />
        </linearGradient>
      </svg>
      <ToolboxHead>
        <ChevronsLeft size={14} strokeWidth={2} />
      </ToolboxHead>
      <ToolboxGrip>
        <Grip />
      </ToolboxGrip>
      <Tools>
        {TOOLS.map((tool) => (
          <ToolButton key={tool.name} tool={tool} />
        ))}
      </Tools>
      <ProxyRow>
        <ToolProxy />
      </ProxyRow>
      <ModeRow $height={31} $top={9}>
        <button aria-label="カラー">
          <svg width="20" height="20" fill="none">
            <path d="M3 3h14v14H3z" fill="#2b2b2b" stroke="#000" strokeWidth="5" />
          </svg>
        </button>
        <button aria-label="グラデーション">
          <svg width="20" height="20">
            <path d="M1 1h18v18H1z" fill="url(#modeRamp)" stroke="#000" strokeWidth="2" />
            <linearGradient id="modeRamp">
              <stop offset="0" stopColor="#fff" />
              <stop offset="1" stopColor="#444" />
            </linearGradient>
          </svg>
        </button>
        <button aria-label="なし">
          <svg width="20" height="20">
            <path d="M1 1h18v18H1z" fill="#fff" stroke="#000" strokeWidth="2" />
            <path d="M3 17 17 3" stroke="#f00" strokeWidth="4" />
          </svg>
        </button>
      </ModeRow>
      <ModeRow $height={28} $top={8}>
        <button aria-label="標準描画">
          <svg width="18" height="18" fill="#77787a" stroke="#c4c5c7" strokeWidth="1.500">
            <circle cx="7" cy="7" r="5.500" />
            <path d="M8 8h8v8H8z" fill="#c4c5c7" />
          </svg>
        </button>
        <button aria-label="背面描画">
          <svg width="18" height="18" fill="#77787a" stroke="#c4c5c7" strokeWidth="1.500">
            <path d="M9 9h7v7H9z" fill="#c4c5c7" />
            <circle cx="8" cy="8" r="5.500" />
          </svg>
        </button>
        <button aria-label="内側描画">
          <svg width="18" height="18" fill="#77787a" stroke="#c4c5c7" strokeWidth="1.500">
            <circle cx="9" cy="9" r="5.200" />
            <path d="M9 9h5q0 4-5 5z" fill="#c4c5c7" stroke="none" />
          </svg>
        </button>
      </ModeRow>
      <ScreenMode aria-label="スクリーンモード">
        <svg width="34" height="26" fill="#77787a" stroke="#c4c5c7" strokeWidth="1.400">
          <path d="M1 7h20v18H1z" />
          <path d="M1 8.500h19" strokeWidth="3" />
          <path d="M13 1h20v17H13z" />
          <path d="M13 2.500h20" strokeWidth="3" />
        </svg>
      </ScreenMode>
    </Toolbox>
  );
}

function OptionsBar() {
  return (
    <ControlBar>
      <Grip $vertical />
      <ObjectKind>直線</ObjectKind>
      <Divider $height={34} $color="#4a4b4d" />
      <SwatchCombo width={58} label="塗り">
        <NoneSwatch />
      </SwatchCombo>
      <SwatchCombo width={58} label="線">
        <StrokeSwatch />
      </SwatchCombo>
      <StrokeLabel>
        <Dotted href="#stroke">線 :</Dotted>
      </StrokeLabel>
      <Stepper width={142} label="太さ" />
      <SampleCombo width={165} label="可変線幅" value="均等" line={76} />
      <SampleCombo width={162} label="ブラシ" value="基本" line={73} />
      <Dotted href="#opacity">不透明度 :</Dotted>
      <Control $width={128}>
        <ValueInput type="text" aria-label="不透明度" defaultValue="100%" />
        <Arrow aria-label="不透明度の調整">
          <ChevronRight size={17} strokeWidth={2} />
        </Arrow>
      </Control>
      <span>スタイル :</span>
      <Control $width={59}>
        <SwatchButton aria-label="スタイル">
          <svg width="30" height="29">
            <path d="M0 0h30v29H0z" fill="#e2e3e5" />
          </svg>
        </SwatchButton>
        <Arrow aria-label="スタイルの一覧">
          <Down />
        </Arrow>
      </Control>
      <Divider $height={34} $color="#4a4b4d" />
      <IconButton aria-label="オブジェクトを再配色">
        <ColorWheel />
      </IconButton>
    </ControlBar>
  );
}

function App() {
  return (
    <Screen>
      <GlobalStyle />
      <MenuBar>
        <FaApple size={21} />
        <strong>Illustrator</strong>
        {MENUS.map((item) => (
          <a key={item} href="#menu">
            {item}
          </a>
        ))}
      </MenuBar>
      <AppWindow>
        <TitleBar>
          <Lights>
            <Light $color="#fc5b57" $dot aria-label="閉じる" />
            <Light $color="#fdbc2e" aria-label="しまう" />
            <Light $color="#28c840" aria-label="拡大" />
          </Lights>
          <IconButton aria-label="ホーム">
            <svg width="28" height="25" fill="currentColor">
              <path d="M14 0 28 13l-1.500 1.500H25V25h-7.500v-9h-6v9H3V14.500H1.500L0 13z" />
            </svg>
          </IconButton>
          <LayoutTools>
            <Divider />
            <IconButton aria-label="ワークスペース">
              <svg width="27" height="18" fill="currentColor">
                <path d="M0 0h13v18H0zM14.500 0H27v8H14.500zM14.500 9.500H27V18H14.500z" />
              </svg>
            </IconButton>
            <IconButton aria-label="ワークスペースの一覧" $color="#e6e6e6">
              <ChevronDown size={17} strokeWidth={2} />
            </IconButton>
          </LayoutTools>
          <Title>Adobe Illustrator 2020</Title>
        </TitleBar>
        <OptionsBar />
        <Workspace>
          <ToolPalette />
          <Main>
            <TabBar>
              <DocTab>
                <IconButton aria-label="書類を閉じる" $color="#f0f0f0">
                  <X size={16} strokeWidth={2} />
                </IconButton>
                chizu.ai* @ 600% (CMYK/GPU プレビュー)
              </DocTab>
            </TabBar>
            <Stage>
              <Canvas>
                <LineObject>
                  <Anchor $at="0%" />
                  <Anchor $at="50%" $round />
                  <Anchor $at="100%" />
                </LineObject>
                <Caption width="340" height="120">
                  <text x="17" y="87">
                    線幅
                  </text>
                  <text x="179" y="87" fontSize="80">
                    4pt
                  </text>
                </Caption>
                <Dock>
                  <ColorPanel />
                  <StrokePanel />
                  <AppearancePanel />
                </Dock>
              </Canvas>
              <ScrollBar>
                <ChevronUp size={16} strokeWidth={1.5} />
                <ScrollThumb />
              </ScrollBar>
            </Stage>
          </Main>
        </Workspace>
      </AppWindow>
      <Arrows width="560" height="660" fill="#ff951c">
        <path d="M107 353q3-6 8-1C122 396 150 470 170 508l21-11-19.500 92L109 517l24 1C134 475 121 420 107 353z" />
        <path d="M366 604C415 603 450 600 485 592l-6-17 65 32.500-65 32.500 5-18C450 613 410 611 366 610q-5-3 0-6z" />
      </Arrows>
    </Screen>
  );
}

export default App;
